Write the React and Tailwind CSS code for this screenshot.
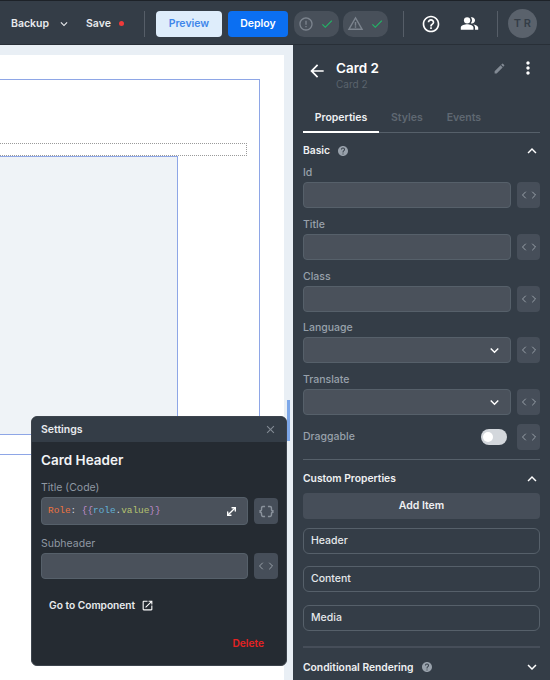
import React from 'react';
import { ChevronLeft, ChevronRight, MoveDiagonal } from 'lucide-react';
import {
  MdArrowBack, MdExpandMore, MdExpandLess, MdCheck, MdEdit, MdMoreVert, MdErrorOutline, MdWarningAmber,
  MdHelpOutline, MdHelp, MdPeopleAlt, MdClose, MdOpenInNew, MdDataObject,
} from 'react-icons/md';

function CodeBtn({ wide }) {
  return (
    <div className={`${wide ? 'w-[24px]' : 'w-[23px]'} h-[26px] rounded bg-[#464e59] flex items-center justify-center text-[#a4abb4] shrink-0`}>
      <ChevronLeft size={12} strokeWidth={1.75} className="-mr-[1px]" />
      <ChevronRight size={12} strokeWidth={1.75} className="-ml-[1px]" />
    </div>
  );
}

function Field({ label, select }) {
  return (
    <div className="mb-[8.75px]">
      <div className="text-[10.5px] leading-[15px] font-medium text-[#98a1ab] mb-[2px]">{label}</div>
      <div className="flex gap-[6px] items-center">
        <div className="flex-1 h-[26px] rounded bg-[#4a515b] border border-[#56606a] flex items-center justify-end pr-[7px]">
          {select && <MdExpandMore size={17} className="text-white" />}
        </div>
        <CodeBtn />
      </div>
    </div>
  );
}

function ItemBox({ label }) {
  return (
    <div className="h-[26px] rounded-md border border-[#56606a] flex items-center px-[7px] text-[10.5px] font-medium text-[#e5e8eb] mb-[12.5px]">
      {label}
    </div>
  );
}

function SectionHead({ title, help, open }) {
  return (
    <div className="flex items-center justify-between h-[18px] -mr-[1px]">
      <div className="flex items-center gap-[7px]">
        <span className="text-[10.3px] font-semibold text-[#eef0f2]">{title}</span>
        {help && <MdHelp size={12} className="text-[#98a1ab]" />}
      </div>
      {open ? <MdExpandLess size={18} className="text-white" /> : <MdExpandMore size={18} className="text-white" />}
    </div>
  );
}

function TopBar() {
  return (
    <div className="h-[45px] shrink-0 pt-[2px] bg-[#343d47] border-t border-t-[#1d2228] border-b border-b-[#282f37] flex items-center text-white">
      <span className="ml-[11px] text-[10.5px] font-semibold text-[#e8eaed]">Backup</span>
      <MdExpandMore size={14} className="ml-[8px] text-[#e8eaed]" />
      <span className="ml-[15px] text-[10.5px] font-semibold text-[#e8eaed]">Save</span>
      <span className="ml-[8px] w-[5px] h-[5px] rounded-full bg-[#f03a3a]" />
      <div className="ml-[20px] w-px h-[26px] bg-[#565e68]" />
      <button className="ml-[11px] w-[66px] h-[26px] rounded bg-[#deedfb] text-[#3f86ea] text-[10.5px] font-semibold">Preview</button>
      <button className="ml-[6px] w-[60px] h-[26px] rounded bg-[#0b6ff2] text-white text-[10.5px] font-semibold">Deploy</button>
      <div className="ml-[6px] w-[45px] h-[26px] rounded-[10px] bg-[#48505a] flex items-center justify-center gap-[6px]">
        <MdErrorOutline size={16} className="text-[#7c848e]" />
        <MdCheck size={14} className="text-[#22b566]" />
      </div>
      <div className="ml-[4px] w-[45px] h-[26px] rounded-[10px] bg-[#48505a] flex items-center justify-center gap-[6px]">
        <MdWarningAmber size={17} className="text-[#7c848e]" />
        <MdCheck size={14} className="text-[#22b566]" />
      </div>
      <div className="ml-[15px] w-px h-[26px] bg-[#565e68]" />
      <MdHelpOutline size={20} className="ml-[17px] text-white" />
      <MdPeopleAlt size={19} className="ml-[19px] text-white" />
      <div className="ml-[18px] w-px h-[26px] bg-[#565e68]" />
      <div className="ml-[10px] w-[29px] h-[29px] rounded-full bg-[#5a626c] flex items-center justify-center text-[#343d47] text-[11px] font-semibold">T R</div>
    </div>
  );
}

function Canvas() {
  return (
    <div className="relative w-[293px] shrink-0 bg-[#e9eff5] pt-[10px] pr-[9px]">
      <div className="bg-white h-full pt-[24px] pr-[24px]">
        <div className="h-[376px] border border-l-0 border-[#8ea6e6] pt-[63px] pr-[12px] flex flex-col">
          <div className="h-[13px] shrink-0 border border-l-0 border-dotted border-[#9a9a9a]" />
          <div className="w-[178px] h-[279px] shrink-0 bg-[#eff3f7] border border-l-0 border-[#8ea6e6]" />
        </div>
      </div>
      <div className="absolute left-[287px] top-[355px] w-[3px] h-[41px] bg-[#7da7e8]" />
      <SettingsPopup />
    </div>
  );
}

function SettingsPopup() {
  return (
    <div className="absolute left-[31px] top-[371px] w-[256px] h-[250px] rounded-md bg-[#252b32] border border-[#3d444d] overflow-hidden">
      <div className="h-[25px] bg-[#343d47] flex items-center justify-between pl-[9px] pr-[9px]">
        <span className="text-[10.5px] font-semibold text-[#e8eaed]">Settings</span>
        <MdClose size={13} className="text-[#828a94]" />
      </div>
      <div className="pl-[9px] pr-[8px] pt-[8px]">
        <div className="text-[13.5px] leading-[20px] font-semibold text-[#f2f3f5]">Card Header</div>
        <div className="mt-[10px] text-[10.5px] leading-[15px] text-[#8f98a2] mb-[2px]">Title (Code)</div>
        <div className="flex gap-[6px] items-center">
          <div className="w-[207px] h-[28px] rounded bg-[#4a515b] border border-[#56606a] flex items-center justify-between pl-[6px] pr-[9px] font-['Liberation_Mono',monospace] text-[9.4px]">
            <span>
              <span className="text-[#ee7440]">Role</span><span className="text-[#d5d9de]">: </span>
              <span className="text-[#c08ccb]">{'{{'}</span><span className="text-[#62b2d8]">role</span><span className="text-[#d5d9de]">.</span><span className="text-[#b5c270]">value</span><span className="text-[#c08ccb]">{'}}'}</span>
            </span>
            <MoveDiagonal size={13} strokeWidth={2.5} className="text-white" />
          </div>
          <div className="w-[24px] h-[26px] rounded bg-[#464e59] flex items-center justify-center text-[#8a929c]">
            <MdDataObject size={17} />
          </div>
        </div>
        <div className="mt-[11px] text-[10.5px] leading-[15px] text-[#8f98a2] mb-[2px]">Subheader</div>
        <div className="flex gap-[6px] items-center">
          <div className="w-[207px] h-[26px] rounded bg-[#4a515b] border border-[#56606a]" />
          <CodeBtn wide />
        </div>
        <div className="mt-[19px] ml-[8px] flex items-center gap-[6px] leading-[15px]">
          <span className="text-[10.2px] font-semibold text-[#e8eaed]">Go to Component</span>
          <MdOpenInNew size={13} className="text-white" />
        </div>
        <div className="mt-[23px] mr-[14px] text-right text-[10.2px] leading-[15px] font-semibold text-[#e62222]">Delete</div>
      </div>
    </div>
  );
}

function Panel() {
  return (
    <div className="flex-1 bg-[#343d47] overflow-hidden pt-[13px]">
      <div className="flex items-start pl-[14px] pr-[12px]">
        <MdArrowBack size={20} className="text-white mt-[3px]" />
        <div className="ml-[9px] flex-1">
          <div className="text-[13.5px] leading-[20px] font-semibold text-white">Card 2</div>
          <div className="text-[10px] leading-[13px] text-[#5a636d]">Card 2</div>
        </div>
        <MdEdit size={13} className="text-[#828a94] mt-[4px] mr-[12px]" />
        <MdMoreVert size={20} className="text-white" />
      </div>
      <div className="mx-[10px] mt-[16px] border-b border-[#56606a] flex h-[26px] text-[10.5px] font-semibold">
        <div className="w-[76px] -mb-px border-b-2 border-white text-center text-[#eef0f2] leading-[22px]">Properties</div>
        <div className="ml-[12px] text-[#5f6872] leading-[22px]">Styles</div>
        <div className="ml-[24px] text-[#5f6872] leading-[22px]">Events</div>
      </div>
      <div className="px-[10px] pt-[9px]">
        <SectionHead title="Basic" help open />
        <div className="mt-[5px]">
          <Field label="Id" />
          <Field label="Title" />
          <Field label="Class" />
          <Field label="Language" select />
          <Field label="Translate" select />
        </div>
        <div className="flex items-center justify-between h-[26px]">
          <span className="text-[10.5px] font-medium text-[#98a1ab]">Draggable</span>
          <div className="flex items-center gap-[10px]">
            <div className="w-[26px] h-[16px] rounded-full bg-[#d3d7dc] flex items-center pl-[2px]">
              <div className="w-[10px] h-[10px] rounded-full bg-white" />
            </div>
            <CodeBtn />
          </div>
        </div>
        <div className="mt-[9px] border-t border-[#56606a] pt-[10px]">
          <SectionHead title="Custom Properties" open />
          <div className="mt-[5px] h-[26px] rounded bg-[#464e59] flex items-center justify-center text-[10.5px] font-semibold text-[#eef0f2]">Add Item</div>
          <div className="mt-[9px]">
            <ItemBox label="Header" />
            <ItemBox label="Content" />
            <ItemBox label="Media" />
          </div>
        </div>
        <div className="mt-[15.5px] border-t-2 border-[#464e59] pt-[10px]">
          <SectionHead title="Conditional Rendering" help />
        </div>
      </div>
    </div>
  );
}

export default function App() {
  return (
    <div className="w-[550px] h-[680px] flex flex-col overflow-hidden font-['Inter',sans-serif]">
      <TopBar />
      <div className="flex-1 flex min-h-0">
        <Canvas />
        <Panel />
      </div>
    </div>
  );
}
